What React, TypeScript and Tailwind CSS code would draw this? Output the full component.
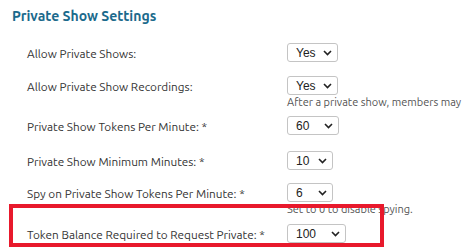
function FakeSelect({ value, width }: { value: string; width: string }) {
	return (
		<div
			className={`${width} h-[19px] flex items-center justify-between rounded-[3px] border border-[#c4c4c4] bg-white pl-[8px] pr-[5px] text-[12px] text-[#222] font-['Liberation_Sans',sans-serif]`}
		>
			<span>{value}</span>
			<svg width="9" height="6" viewBox="0 0 9 6" className="shrink-0">
				<path d="M1 1l3.5 3.5L8 1" fill="none" stroke="#222" strokeWidth="1.6" />
			</svg>
		</div>
	);
}

function Row({
	label,
	value,
	width,
	help,
	className,
}: {
	label: string;
	value: string;
	width: string;
	help?: string;
	className?: string;
}) {
	return (
		<div className={`flex ${className ?? ""}`}>
			<div className="w-[260px] h-[21px] flex items-center shrink-0 text-[11.75px] text-[#333]">
				{label}
			</div>
			<div className="flex flex-col">
				<FakeSelect value={value} width={width} />
				{help && (
					<div className="text-[11px] leading-[13px] mt-[1px] text-[#555] whitespace-nowrap">
						{help}
					</div>
				)}
			</div>
		</div>
	);
}

export default function App() {
	return (
		<div className="relative w-[464px] h-[250px] overflow-hidden bg-white font-['Ubuntu','Lato',sans-serif]">
			<div className="pl-[12px] pt-[5px]">
				<h2 className="text-[14px] leading-[22px] font-bold text-[#1b6a8c]">
					Private Show Settings
				</h2>
				<div className="pl-[15px] flex flex-col">
					<Row className="mt-[16px]" label="Allow Private Shows:" value="Yes" width="w-[51px]" />
					<Row
						className="mt-[12px]"
						label="Allow Private Show Recordings:"
						value="Yes"
						width="w-[51px]"
						help="After a private show, members may request a recording of the show."
					/>
					<Row className="mt-[7px]" label="Private Show Tokens Per Minute: *" value="60" width="w-[52px]" />
					<Row className="mt-[14px]" label="Private Show Minimum Minutes: *" value="10" width="w-[46px]" />
					<Row
						className="mt-[11px]"
						label="Spy on Private Show Tokens Per Minute: *"
						value="6"
						width="w-[46px]"
						help="Set to 0 to disable spying."
					/>
					<Row
						className="mt-[8px]"
						label="Token Balance Required to Request Private: *"
						value="100"
						width="w-[59px]"
					/>
				</div>
			</div>
			<div className="absolute left-[9px] top-[204px] w-[375px] h-[43px] border-[4px] border-[#e8192c]" />
		</div>
	);
}
